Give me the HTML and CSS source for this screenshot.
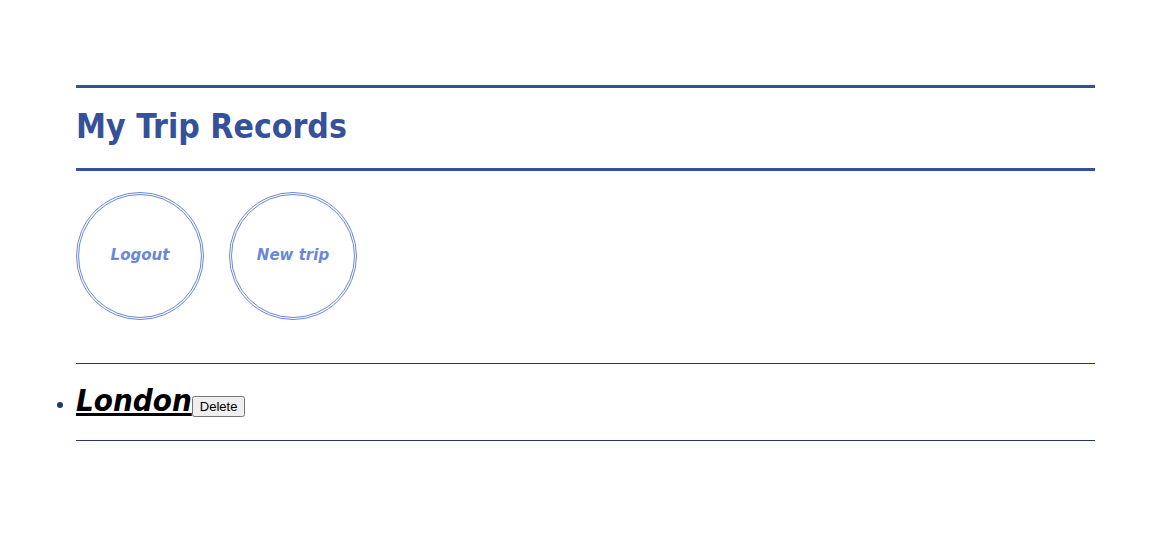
FILE: index.html
```html
<!DOCTYPE html>
<html>
<head>
<meta charset="utf-8">
<link rel="stylesheet" href="styles.css">
</head>
<body>
<div class="page">
  <header class="title-bar">
    <h1 class="title">My Trip Records</h1>
  </header>
  <nav class="actions">
    <a class="circle-btn" href="#">Logout</a>
    <a class="circle-btn" href="#">New trip</a>
  </nav>
  <section class="trips">
    <ul class="trip-list">
      <li class="trip-item"><a class="trip-name" href="#">London</a><button class="delete-btn">Delete</button></li>
    </ul>
  </section>
</div>
</body>
</html>
```
FILE: styles.css
```css
html, body {
  margin: 0;
  padding: 0;
  background: #ffffff;
}
body {
  font-family: "DejaVu Sans", Verdana, sans-serif;
}
.page {
  margin-left: 76px;
  width: 1019px;
  padding-top: 85px;
}
.title-bar {
  border-top: 3px solid #34519a;
  border-bottom: 3px solid #34519a;
  height: 80px;
  display: flex;
  align-items: center;
}
.title {
  margin: 0 0 4px 0;
  font-family: "DejaVu Sans Condensed", "DejaVu Sans", sans-serif;
  font-stretch: condensed;
  font-size: 33.5px;
  font-weight: bold;
  color: #34519a;
}
.actions {
  display: flex;
  gap: 25px;
  padding-top: 21px;
  padding-bottom: 43px;
}
.circle-btn {
  width: 128px;
  height: 128px;
  box-sizing: border-box;
  border: 3px double #6a88d8;
  border-radius: 50%;
  display: flex;
  align-items: center;
  justify-content: center;
  padding-bottom: 3px;
  color: #6a88d8;
  font-size: 15px;
  font-weight: bold;
  font-style: italic;
  text-decoration: none;
}
.trips {
  border-top: 1px solid #1f3872;
  border-bottom: 1px solid #1f3872;
}
.trip-list {
  margin: 0;
  padding: 18px 0 22px 0;
  list-style: disc;
  color: #1f3872;
}
.trip-item::marker {
  font-size: 20px;
}
.trip-name {
  color: #000000;
  font-family: "DejaVu Sans Condensed", "DejaVu Sans", sans-serif;
  font-stretch: condensed;
  font-size: 31px;
  font-weight: bold;
  font-style: italic;
  text-decoration: underline;
}
.delete-btn {
  font-family: "Liberation Sans", Arial, sans-serif;
  font-size: 13px;
  vertical-align: 0;
}
```
